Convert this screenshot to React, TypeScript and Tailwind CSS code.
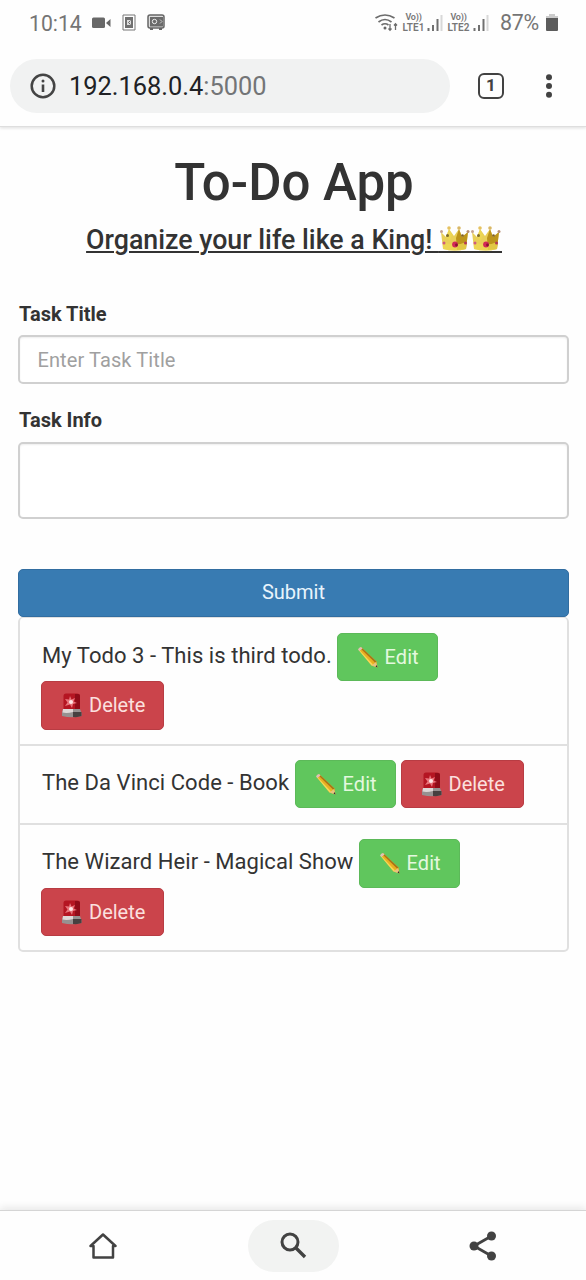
import React from "react";

function Crown() {
  return (
    <svg viewBox="0 0 31 28" className="h-[28px] w-[31px] shrink-0">
      <path d="M2 7 7 12 10 4 15 11 20 4 23 12 29 7 27 24Q16 27 4 24Z" fill="#e9cf58" />
      <path d="M17 13 20 4 23 12 29 7 27 24 18 25Z" fill="#bd951c" />
      <path d="M7 12 10 4 13 10 11 16ZM4 17Q16 22 27 17L27 24Q16 27 4 24Z" fill="#eed851" fillOpacity=".75" />
      <circle cx="2.500" cy="6.500" r="1.500" fill="#c7a38c" />
      <circle cx="10" cy="3" r="1.800" fill="#e6c260" />
      <circle cx="20" cy="3" r="1.800" fill="#d9b765" />
      <circle cx="29" cy="6.500" r="1.500" fill="#b58e75" />
      <circle cx="16" cy="19.500" r="2.900" fill="#d32857" />
      <circle cx="17.500" cy="20" r="1.400" fill="#861532" />
      <circle cx="5" cy="18" r="1.500" fill="#cf5b7c" />
      <circle cx="26.500" cy="18" r="1.500" fill="#b13756" />
      <circle cx="8.500" cy="10.500" r="1.500" fill="#7d6b2d" />
      <circle cx="23.500" cy="10.500" r="1.300" fill="#7d602c" />
    </svg>
  );
}

function Pencil() {
  return (
    <svg viewBox="0 0 24 24" className="h-6 w-6 shrink-0">
      <path d="M2.500 4.500 5 2 20.500 16.500 21.500 22.500 15.500 20.500Z" fill="#e9b020" />
      <path d="M3.500 5 17 19.500 15.500 20.500 2.500 5Z" fill="#f8d65a" />
      <path d="M6 3 20.500 16.500 19.500 18 5 4Z" fill="#a87319" />
      <path d="M2 4.500Q3 2 5 2L6.500 3.500 3.500 6Z" fill="#dfc0b5" />
      <path d="M15.500 20.500 20 17 21.500 22.500Z" fill="#e5c380" />
      <path d="M19.500 21.800 20.800 20 21.500 22.500Z" fill="#333" />
    </svg>
  );
}

function Siren() {
  return (
    <svg viewBox="0 0 24 26" className="h-[26px] w-6 shrink-0">
      <path d="M3.500 18V4Q3.500 1.500 6 1.500H17Q20 1.500 20 4V18Z" fill="#b51522" />
      <path d="M15 2H18Q20 2 20 4V18H15Z" fill="#900b18" />
      <path d="M10 4 11.500 7.500 15 6 13.500 9.500 17 11 13 12 12 16 10 12.500 5 14 7.500 10.500 5 7 9 7.500Z" fill="#e8747b" />
      <circle cx="11" cy="10" r="2" fill="#ffe7e7" />
      <path d="M3 17H20L21.500 21V24Q12 26.500 2 24V21Z" fill="#969191" />
      <path d="M3 17H13V20Q7 21.500 2.500 20.500Z" fill="#dfd8d8" />
      <path d="M13 20 21.500 20V24Q18 25.500 13 25Z" fill="#464040" />
    </svg>
  );
}

function Edit() {
  return (
    <button className="flex h-[48.5px] w-[100.5px] items-center rounded-[5px] border border-[#5cb959] bg-[#60c65d] pl-[18px] text-[20px] text-[#e4f8df]">
      <Pencil />
      <span className="ml-[4.5px] tracking-[0.1px]">Edit</span>
    </button>
  );
}

function Delete() {
  return (
    <button className="flex h-[48.5px] w-[123px] items-center rounded-[5px] border border-[#b83c43] bg-[#cb444b] pl-[18px] text-[20px] text-[#fbe0df]">
      <Siren />
      <span className="ml-[5px]">Delete</span>
    </button>
  );
}

function Signal() {
  return (
    <svg viewBox="0 0 16 18" className="h-[18px] w-4">
      <path d="M1.500 14V17M6 11V17M10.500 5V17" stroke="#707070" strokeWidth="2" />
      <path d="M14.500 1V17" stroke="#d8d8d8" strokeWidth="2" />
    </svg>
  );
}

function Lte({ n }: { n: number }) {
  return (
    <div className="flex w-[23px] flex-col items-center font-semibold whitespace-nowrap text-[#777]">
      <span className="text-[9px] leading-[10px] tracking-[-0.2px]">Vo))</span>
      <span className="text-[10px] leading-[11px] tracking-[0.1px]">LTE{n}</span>
    </div>
  );
}

export default function App() {
  return (
    <div className="flex h-[1280px] w-[586px] flex-col overflow-hidden bg-[#fefefe] font-['Roboto',sans-serif] text-[#333]">
      <header className="h-[127px] shrink-0 border-b border-[#dedede] shadow-[0_1px_3px_#ddd]">
        <div className="flex h-[46px] items-center pl-[29px] text-[#757575]">
          <span className="w-[63px] pt-px text-[21.2px]">10:14</span>
          <svg viewBox="0 0 20 14" className="mb-px h-[14px] w-5"><rect y="1.500" width="13" height="10.500" rx="1.500" fill="#686868" /><path d="M14 7 18.500 3V11Z" fill="#686868" /></svg>
          <svg viewBox="0 0 14 17" className="mb-px ml-[10px] h-[17px] w-[14px]"><path d="M1 1H13V16H1Z" fill="none" stroke="#777" /><path d="M3 3H11V14H3Z" fill="#707070" /><path d="M5 6H9V11H5Z" fill="#ddd" /><path d="m8.500 6.500-2 2 2 2" fill="none" stroke="#666" /></svg>
          <svg viewBox="0 0 18 17" className="mb-px ml-[11px] h-[17px] w-[18px]"><rect x="1" y="1" width="16" height="13" rx="2" fill="#ddd" stroke="#666" strokeWidth="1.500" /><rect x="3" y="3" width="13" height="9.500" fill="#6a6a6a" /><circle cx="7.500" cy="7.500" r="2.200" fill="none" stroke="#eee" /><path d="M13 5.500 15 7.500 13 9.500" fill="none" stroke="#ccc" /><path d="M3 15H6M12 15H15" stroke="#666" strokeWidth="2" /></svg>
          <div className="ml-auto flex items-center pr-[28px]">
            <svg viewBox="0 0 24 20" className="h-5 w-6"><g fill="none" stroke="#6c6c6c" strokeWidth="1.700"><path d="M.5 5Q10-1 19.500 5M3.500 9Q10 4 16.500 9M6.500 12Q10 9.500 13.500 12" /><path d="M15 11V17M13.500 15.500 15 17.300 16.500 15.500M20.500 17V11M19 12.500 20.500 10.700 22 12.500" strokeWidth="1.300" /></g><circle cx="10" cy="15" r="1.500" fill="#666" /></svg>
            <div className="ml-[3px]"><Lte n={1} /></div>
            <div className="ml-[2px]"><Signal /></div>
            <div className="ml-[4px]"><Lte n={2} /></div>
            <div className="ml-[3px]"><Signal /></div>
            <span className="ml-[11px] w-[46px] pt-px text-[21.4px] tracking-[-0.3px]">87%</span>
            <svg viewBox="0 0 12 19" className="mb-px h-[19px] w-3"><path d="M3 1H9V3H12V6H0V3H3Z" fill="#ccc" /><path d="M0 5H12V17Q12 18 11 18H1Q0 18 0 17Z" fill="#5c5c5c" /></svg>
          </div>
        </div>
        <div className="flex h-[79px] items-center pl-[10px]">
          <div className="flex h-[54px] w-[440px] items-center rounded-full bg-[#f1f2f2] pl-[20px]">
            <svg viewBox="0 0 26 26" className="h-[26px] w-[26px]"><circle cx="13" cy="13" r="11.300" fill="none" stroke="#444" strokeWidth="2.500" /><path d="M13 11.500V19" stroke="#444" strokeWidth="2.600" /><circle cx="13" cy="8" r="1.500" fill="#444" /></svg>
            <span className="ml-[13px] pt-[2px] text-[25.4px] whitespace-nowrap text-[#202124]">192.168.0.4<span className="text-[#737577]">:5000</span></span>
          </div>
          <div className="ml-[28px] flex h-[26px] w-[26px] items-center justify-center rounded-[6px] border-[2.500px] border-[#424242] text-[17px] font-bold text-[#424242]">1</div>
          <svg viewBox="0 0 8 26" className="ml-[41px] h-[26px] w-2" fill="#424242"><circle cx="4" cy="4.300" r="3" /><circle cx="4" cy="13" r="3" /><circle cx="4" cy="21.700" r="3" /></svg>
        </div>
      </header>

      <main className="flex-1 px-[18px] pt-[28px]">
        <h1 className="pl-[2px] text-center text-[51px] leading-[56px] font-medium">To-Do App</h1>
        <h2 className="mt-[14px] flex h-[30px] items-center justify-center pl-[2px] text-[26.75px] leading-[30px] font-medium whitespace-nowrap">
          <span className="whitespace-pre underline decoration-2 underline-offset-[2px]">Organize your life like a King! </span>
          <span className="flex h-[26px] w-[63px] items-center border-b-2 border-[#333]"><Crown /><Crown /></span>
        </h2>
        <label className="mt-[45px] ml-px block h-[35px] text-[20px] leading-[29px] font-bold">Task Title</label>
        <input placeholder="Enter Task Title" className="block h-[49px] w-[551px] rounded-[5px] border-2 border-[#d0d0d0] bg-white px-[17.5px] text-[20px] tracking-[0.1px] shadow-[inset_0_1px_2px_#eee] placeholder:text-[#a0a0a0]" />
        <label className="mt-[22px] ml-px block h-[36px] text-[20px] leading-[29px] font-bold">Task Info</label>
        <textarea className="block h-[77px] w-[551px] resize-none rounded-[5px] border-2 border-[#d0d0d0] bg-white shadow-[inset_0_1px_2px_#eee]" />
        <button className="mt-[49.5px] block h-[48.5px] w-[551px] rounded-[5px] border border-[#326da0] bg-[#387bb2] pb-[2px] text-[20px] text-[#e8f4fc]">Submit</button>
        <ul className="w-[551px] rounded-[5px] border-2 border-t border-[#e0e0e0] text-[22px] whitespace-nowrap">
          <li className="flex h-[127.5px] flex-wrap content-start border-b-2 border-[#e0e0e0] pt-[14.5px] pl-[21px]">
            <span className="w-[296px] pt-[6px] pl-px tracking-[0.05px]">My Todo 3 - This is third todo.</span><Edit />
            <div className="w-full"><Delete /></div>
          </li>
          <li className="flex h-[79px] border-b-2 border-[#e0e0e0] pt-[14px] pl-[21px]">
            <span className="w-[254px] pt-[6px] pl-px tracking-[0.05px]">The Da Vinci Code - Book</span><Edit /><div className="ml-[5px]"><Delete /></div>
          </li>
          <li className="flex h-[125px] flex-wrap content-start pt-[14.5px] pl-[21px]">
            <span className="w-[318px] pt-[6px] pl-px tracking-[0.05px]">The Wizard Heir - Magical Show</span><Edit />
            <div className="w-full"><Delete /></div>
          </li>
        </ul>
      </main>

      <nav className="flex h-[70px] shrink-0 items-center border-t border-[#d5d5d5] shadow-[0_-2px_8px_#e5e5e5]">
        <div className="flex w-[248px] pl-[89px]"><svg viewBox="0 0 28 28" className="mt-px h-7 w-7"><path d="M1.500 14 14 2.500 26.500 14H24V25.500H4.500V14Z" fill="none" stroke="#424242" strokeWidth="2.500" strokeLinejoin="round" /></svg></div>
        <div className="flex h-[52px] w-[91px] items-center justify-center rounded-full bg-[#f2f3f2]"><svg viewBox="0 0 27 27" className="h-[27px] w-[27px]"><circle cx="10" cy="10" r="8" fill="none" stroke="#424242" strokeWidth="3" /><path d="M16 16 25 25" stroke="#424242" strokeWidth="3.300" /></svg></div>
        <svg viewBox="0 0 28 30" className="ml-[130px] h-[30px] w-7"><path d="M22.500 5 5 15 22.500 25" fill="none" stroke="#424242" strokeWidth="2.800" /><g fill="#424242"><circle cx="22.500" cy="5" r="4.500" /><circle cx="5" cy="15" r="4.500" /><circle cx="22.500" cy="25" r="4.500" /></g></svg>
      </nav>
    </div>
  );
}
